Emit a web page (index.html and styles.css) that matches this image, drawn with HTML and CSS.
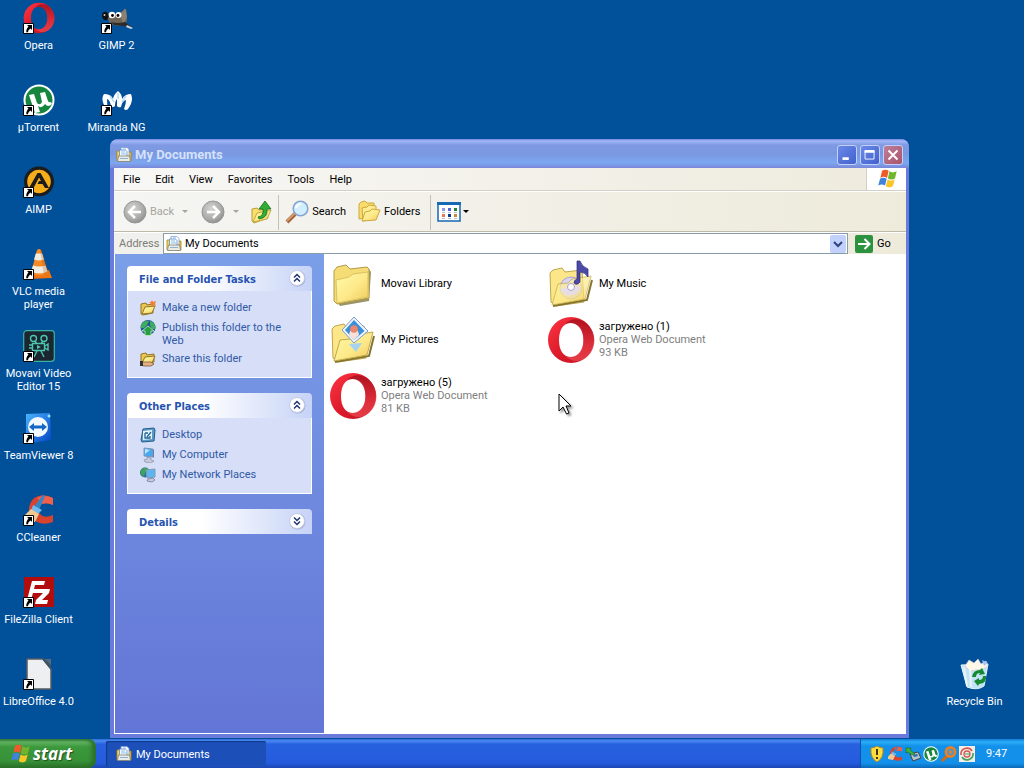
FILE: index.html
```html
<!DOCTYPE html>
<html lang="en">
<head>
<meta charset="utf-8">
<title>Desktop</title>
<link rel="stylesheet" href="styles.css">
</head>
<body>
<svg class="defs" aria-hidden="true">
  <defs>
    <linearGradient id="red" x1="0" y1="0" x2="1" y2="1"><stop offset="0" stop-color="#ff3643"/><stop offset=".5" stop-color="#dd1b2b"/><stop offset="1" stop-color="#c01424"/></linearGradient>
    <linearGradient id="redR" x1="0" y1="0" x2="0" y2="1"><stop offset="0" stop-color="#a00d1a"/><stop offset=".6" stop-color="#e0353f"/><stop offset="1" stop-color="#ee4a52"/></linearGradient>
    <linearGradient id="gold" x1="0" y1="0" x2="1" y2="1"><stop offset="0" stop-color="#fffaa8"/><stop offset=".55" stop-color="#fde98a"/><stop offset="1" stop-color="#efc95a"/></linearGradient>
    <radialGradient id="grey" cx=".4" cy=".35" r=".7"><stop offset="0" stop-color="#d4d4d2"/><stop offset=".7" stop-color="#a9a9a7"/><stop offset="1" stop-color="#8b8b89"/></radialGradient>
    <linearGradient id="tv" x1="0" y1="0" x2="1" y2="1"><stop offset="0" stop-color="#49b4ff"/><stop offset="1" stop-color="#0444c4"/></linearGradient>
    <symbol id="arrow" viewBox="0 0 11 11"><path fill="#fff" stroke="#000" d="M.5.5h10v10H.5z"/><path d="M4 2h5v5L7.600 5.600C6 6.500 5.300 7.500 5 9.300H3.300C3.100 7 4 5.300 5.500 3.600z"/></symbol>
    <symbol id="opera" viewBox="0 0 48 48"><path fill="url(#red)" fill-rule="evenodd" d="M24 1a23 23 0 1 0 0 46a23 23 0 1 0 0-46zM24 7c8 0 12.500 7 12.500 17S32 41 24 41S12 34 12 24S16 7 24 7z"/><path fill="url(#redR)" d="M18 8C24 2 32 2 39 7c11 9 11 25 1 34c-7 6-15 5-22-1c10 4 18.500-4 18.500-16S28 4 18 8z" opacity=".75"/></symbol>
    <symbol id="folder" viewBox="0 0 48 48"><path d="M7 12L9 8l9-2 4 4 17-2 2 3-2 29L10 45 8 42z" fill="#6f6628" opacity=".7" transform="translate(1 1)"/><path d="M5 11l3-4 9-2 4 4 17-2 2 2v29L8 44 5 41z" fill="#f6dc74" stroke="#b29a48"/><path d="M7 20l13-3 4-3 15-2v25L8 43z" fill="url(#gold)" stroke="#d9c163"/></symbol>
    <symbol id="openfolder" viewBox="0 0 48 48"><path d="M3 13l3-3 9-2 3 4 17-2 2 32-28 4-5-4z" fill="#fbe78a" stroke="#bfa64e"/><path d="M6 46l34-6 5-20" fill="none" stroke="#84762f" stroke-width="2"/></symbol>
    <symbol id="front" viewBox="0 0 48 48"><path d="M5 45l6-21 10-1 4-4 19-3-6 23z" fill="url(#gold)" stroke="#c2a84a"/></symbol>
    <symbol id="docs" viewBox="0 0 16 16"><path d="M1 4h3l1 1v9H1z" fill="#ffd84a" stroke="#a88328" stroke-width=".8"/><path d="M12 5h3v9h-4z" fill="#f0c23c" stroke="#a88328" stroke-width=".8"/><path d="M5 .5h6l2 2V9H5z" fill="#fff" stroke="#7d9fd2" stroke-width=".8"/><path d="M3.500 3h6l1.500 1.500V10h-7.500z" fill="#f4faff" stroke="#5b8cc8" stroke-width=".8"/><path d="M5 5h4M5 7h5M7 2h3" stroke="#75b1e8" stroke-width=".8"/><path d="M2.500 9h11l1 5.500H1.500z" fill="#e9ece6" stroke="#85806c" stroke-width=".8"/><path d="M4 11.500h8" stroke="#8fb2d4"/></symbol>
    <symbol id="flag" viewBox="0 0 20 20"><path d="M5.500 2.500q3-2 6 0L10 9Q7 7 4 9z" fill="#ef5a28"/><path d="M12.200 3q3 2 6.600 0l-1.600 6.500q-3 2-6.400 0z" fill="#70b52c"/><path d="M3.700 9.800q3-2 6 0L8.200 16q-3-2-6.200 0z" fill="#3f83dc"/><path d="M10.600 10.500q3 2 6.400 0l-1.700 6.200q-3 2-6.400 0z" fill="#f9c628"/></symbol>
    <symbol id="ut" viewBox="0 0 32 32"><circle cx="16" cy="16" r="15.500" fill="#fff"/><circle cx="16" cy="16" r="13.500" fill="#16863f"/><path d="M6 11l5-1 3 9q3 3 5-1l-2-9 5-1 3 9q1 2 3 1l1 2q-4 4-7 0-3 5-7 2l2 6-5 1z" fill="#fff"/></symbol>
    <symbol id="cc" viewBox="0 0 32 32"><path d="M30 11V4Q19-2 10 5q-7 9-2 18 8 10 22 5v-7q-9 4-13-1-4-7 2-10 5-2 11 1z" fill="#d8432e"/><path d="M30 4v7q-6-3-11-1l-5-6Q21 0 30 4z" fill="#f0614c"/><path d="M20 1l2 1-6 14-6-2z" fill="#3485c9"/><path d="M10 11l9 5-4 4-7-3z" fill="#72b9ed"/><path d="M8 15l8 5-4 8-10-2 0-5z" fill="#f0c992"/></symbol>
    <symbol id="chev" viewBox="0 0 18 18"><circle cx="9.500" cy="9.500" r="8" fill="#8792b5" opacity=".6"/><circle cx="9" cy="9" r="7.500" fill="#fff" stroke="#c5cce6"/><path d="M6 8.500L9 5.500l3 3M6 12.500l3-3 3 3" fill="none" stroke="#21366f" stroke-width="1.500"/></symbol>
    <symbol id="monitor" viewBox="0 0 16 16"><path d="M4 1l9 1v8l-9-1z" fill="#48a7ee" stroke="#7e96bd"/><path d="M5 2l5 1-5 4z" fill="#b7e6ff"/><path d="M13 2l1 1v8l-1-1z" fill="#6c7e9e"/><path d="M7 10l4 1v2l3 1-3 2-6-1-1-2 3-1z" fill="#c6cbe0" stroke="#7a819a" stroke-width=".6"/></symbol>
  </defs>
</svg>

<main class="desktop">
  <nav class="shortcuts" aria-label="Desktop shortcuts">
    <a class="shortcut" href="#"><span class="pic"><svg><use href="#opera"/></svg><svg class="badge"><use href="#arrow"/></svg></span><span>Opera</span></a>
    <a class="shortcut" href="#"><span class="pic"><svg><use href="#ut"/></svg><svg class="badge"><use href="#arrow"/></svg></span><span>µTorrent</span></a>
    <a class="shortcut" href="#"><span class="pic"><svg viewBox="0 0 32 32"><circle cx="16" cy="15.500" r="15" fill="#1c1c1c"/><circle cx="16" cy="15.500" r="11.800" fill="#f5ad1a"/><path d="M14.500 7h3L26 22h-4l-2.500-4h-5l1.500-3h2L16 11.500 10.500 22H6z" fill="#1c1c1c"/></svg><svg class="badge"><use href="#arrow"/></svg></span><span>AIMP</span></a>
    <a class="shortcut" href="#"><span class="pic"><svg viewBox="0 0 32 32"><path d="M6 23l20-1 3 8-24 1z" fill="#ee7414"/><path d="M14 2q2-2 4 0l7 23q-8 5-17 0z" fill="#f68a22"/><path d="M12.800 5.500h6.400l1.800 6q-5 2-10 0zM10 17.500q6 2 12.500 0l2 6q-8 4-16.500 0z" fill="#efece2"/><path d="M17 2l2 0 7 22-5 3z" fill="#a84a08" opacity=".25"/></svg><svg class="badge"><use href="#arrow"/></svg></span><span>VLC media player</span></a>
    <a class="shortcut" href="#"><span class="pic"><svg viewBox="0 0 32 32"><rect x=".7" y=".7" width="30.600" height="30.600" rx="3" fill="#1b2630" stroke="#39b4a4" stroke-width="1.200"/><g fill="none" stroke="#4bc7ae" stroke-width="1.400"><circle cx="10.500" cy="8.500" r="3"/><circle cx="21" cy="8.500" r="3"/><path d="M12 11l2 3M20 11l-2 3M9.500 13.500h12v7h-12zM22 16l3-2v6l-3-2M14 21l-3 6M18 21l3 6M6 15h3M6 18h3"/></g><path d="M14 15l4 2-4 2z" fill="#4bc7ae"/></svg><svg class="badge"><use href="#arrow"/></svg></span><span>Movavi Video Editor 15</span></a>
    <a class="shortcut" href="#"><span class="pic"><svg viewBox="0 0 32 32"><path d="M3 2l24-1 1 27-20 3-5-4z" fill="url(#tv)"/><circle cx="15" cy="15" r="10" fill="#f3f9ff"/><path d="M6 15l5-4v2.500h8V11l5 4-5 4v-2.500h-8V19z" fill="#1268c4"/><circle cx="26" cy="4" r="1.500" fill="#8cecff"/></svg><svg class="badge"><use href="#arrow"/></svg></span><span class="one">TeamViewer 8</span></a>
    <a class="shortcut" href="#"><span class="pic"><svg><use href="#cc"/></svg><svg class="badge"><use href="#arrow"/></svg></span><span>CCleaner</span></a>
    <a class="shortcut" href="#"><span class="pic"><svg viewBox="0 0 32 32"><path d="M1 1h30v30H1z" fill="#b30c0c"/><path d="M9 5h13l-1 4h-9l-1 4h7l-1 4h-7l-2 7H4zM17 13h10l-1 4-7 7h6l-1 4H12l1-4 7-7h-4z" fill="#fff"/></svg><svg class="badge"><use href="#arrow"/></svg></span><span class="one">FileZilla Client</span></a>
    <a class="shortcut" href="#"><span class="pic"><svg viewBox="0 0 32 32"><path d="M4 1h16l8 10v20H4z" fill="#eeeff1" stroke="#555b63" stroke-width="1.500"/><path d="M19 1l9 11V5l-3-4z" fill="#3f5366"/><path d="M22 1h6v6z" fill="#526b80"/></svg><svg class="badge"><use href="#arrow"/></svg></span><span class="one">LibreOffice 4.0</span></a>
    <a class="shortcut" href="#"><span class="pic"><svg viewBox="0 0 32 32"><path d="M6 11q8 3 14 0l4-5 2 9q1 6-4 8-7 2-12-1-4-4-4-11z" fill="#706658"/><path d="M19 11l6-4 1 8-4 7z" fill="#8c806e"/><path d="M1 13q1-4 5-3l2 4-2 4q-5 1-5-5z" fill="#111"/><circle cx="3.500" cy="13" r="1" fill="#ccc"/><circle cx="11" cy="13" r="3.300" fill="#fff"/><circle cx="17.500" cy="13" r="3" fill="#fff"/><circle cx="11.500" cy="13.500" r="1.400"/><circle cx="17" cy="13.500" r="1.400"/><path d="M10 20q6 2 14 0l8 6-9-2-10-1z" fill="#302b28"/><path d="M26 23l6 3-2 1-5-2z" fill="#c8d4dc"/></svg><svg class="badge"><use href="#arrow"/></svg></span><span>GIMP 2</span></a>
    <a class="shortcut" href="#"><span class="pic"><svg viewBox="0 0 32 32"><path d="M5 25Q-1 15 3 10q7 0 9 5 1-5 5-8 4 3 4 8 3-5 9-5 3 7-3 15-2 2-4 0 2-5 2-9-4 1-5 7-3 1-4-1l0-7q-2 2-2 7-2 2-4 0-1-6-4-7 0 6 1 10z" fill="#fff"/><path d="M17 9v6M9 12l4 6M25 12l-4 6" stroke="#b7dcf8" stroke-width="1.500"/></svg><svg class="badge"><use href="#arrow"/></svg></span><span class="one">Miranda NG</span></a>
  </nav>

  <a class="shortcut recycle" href="#"><span class="pic"><svg viewBox="0 0 32 32"><path d="M2 7l27-1-4 22q-7 5-17 1z" fill="#c1e3f5" stroke="#e5f7ff"/><path d="M6 8l4-6 5 3 4-4 3 5 5-3 2 5-5 3-13 2z" fill="#fff8e8" stroke="#c8cbd5" stroke-width=".6"/><path d="M23 2l6 3-4 3z" fill="#a9c2f3"/><path d="M5 9l3 19M11 11l1 18" stroke="#fff" stroke-width="2" opacity=".6"/><path d="M13 19q1-7 8-7l2-2 3 6-6 1 1-2q-4 0-4 4zM27 18q1 7-7 8l-1 2-4-5 5-3v2q4 0 4-4z" fill="#168a31"/></svg></span><span class="one">Recycle Bin</span></a>

  <section class="window" aria-label="My Documents">
    <header class="titlebar">
      <svg class="i16"><use href="#docs"/></svg>
      <h1>My Documents</h1>
      <button class="cap" aria-label="Minimize"><svg viewBox="0 0 20 20"><path d="M5 14h7" stroke="#fff" stroke-width="3"/></svg></button>
      <button class="cap" aria-label="Maximize"><svg viewBox="0 0 20 20"><path d="M4.500 5.500h10v9h-10z" fill="none" stroke="#fff"/><path d="M4 6h11" stroke="#fff" stroke-width="3"/></svg></button>
      <button class="cap close" aria-label="Close"><svg viewBox="0 0 20 20"><path d="M5 5l10 10M15 5L5 15" stroke="#fff" stroke-width="2.200"/></svg></button>
    </header>

    <div class="menubar">
      <button>File</button><button>Edit</button><button>View</button><button>Favorites</button><button>Tools</button><button>Help</button>
      <span class="brand"><svg class="i22"><use href="#flag"/></svg></span>
    </div>

    <div class="toolbar">
      <button class="tool back" disabled><svg class="i24" viewBox="0 0 24 24"><circle cx="12" cy="12" r="11" fill="url(#grey)" stroke="#979795"/><path d="M18 12H7m5-6l-6 6 6 6" fill="none" stroke="#fff" stroke-width="2.500"/></svg>Back<i class="caret"></i></button>
      <button class="tool fwd" disabled aria-label="Forward"><svg class="i24" viewBox="0 0 24 24"><circle cx="12" cy="12" r="11" fill="url(#grey)" stroke="#979795"/><path d="M6 12h11m-5-6l6 6-6 6" fill="none" stroke="#fff" stroke-width="2.500"/></svg><i class="caret"></i></button>
      <button class="tool up" aria-label="Up"><svg class="i24" viewBox="0 0 24 24"><path d="M3 9l5-1 2 2 7-1 2 9-14 5-2-2z" fill="#f8df6e" stroke="#b99f38"/><path d="M4 22l4-9 14-3-4 9z" fill="url(#gold)" stroke="#c2a845"/><path d="M9 17q6-1 5-8h-4l6-8 6 8h-4q1 9-8 10z" fill="#32ad34" stroke="#13701b" stroke-width=".8"/></svg></button>
      <i class="sep"></i>
      <button class="tool"><svg class="i24" viewBox="0 0 24 24"><path d="M2 22l8-8" stroke="#a6653a" stroke-width="4"/><path d="M2 21l8-8" stroke="#e2a67b" stroke-width="1.500"/><circle cx="15.500" cy="8.500" r="7.300" fill="#d2efff" stroke="#87a6d2" stroke-width="1.600"/><path d="M11 8q1-4 5-4" fill="none" stroke="#fff" stroke-width="2"/></svg>Search</button>
      <button class="tool folders"><svg class="i24" viewBox="0 0 24 24"><path d="M2 4l2-2 4-1 2 2 7 0v14L2 19z" fill="#f8dc6c" stroke="#cda93c"/><path d="M5 8l5-1 2-2 7 1v13L6 21z" fill="#ffeb94" stroke="#cda93c"/><path d="M5 21l3-9 5-1 2-2 8 1-4 10z" fill="url(#gold)" stroke="#cda93c"/></svg>Folders</button>
      <i class="sep"></i>
      <button class="tool views" aria-label="Views"><svg class="i24" viewBox="0 0 24 24"><path d="M1 3h22v18H1z" fill="#fff" stroke="#1768b5" stroke-width="1.500"/><path d="M0 2h24v3H0z" fill="#1768b5"/><path d="M5 8h3v3H5z" fill="#9296e8"/><path d="M11 8h3v3h-3z" fill="#4e68d8"/><path d="M17 8h3v3h-3z" fill="#248338"/><path d="M5 14h3v3H5z" fill="#ef7654"/><path d="M11 14h3v3h-3z" fill="#083c87"/><path d="M17 14h3v3h-3z" fill="#c78a36"/><path d="M5 12.500h3m3 0h3m3 0h3M5 18.500h3m3 0h3m3 0h3" stroke="#b7bed4"/></svg><i class="caret"></i></button>
    </div>

    <form class="address">
      <label for="addr">Address</label>
      <div class="combo"><svg class="i16"><use href="#docs"/></svg><input id="addr" type="text" value="My Documents"><button type="button" class="drop" aria-label="Show addresses"><svg viewBox="0 0 16 18"><path d="M4 7l4 4 4-4" fill="none" stroke="#2f437f" stroke-width="2"/></svg></button></div>
      <button type="button" class="go"><svg class="i18" viewBox="0 0 18 18"><rect width="18" height="18" rx="2" fill="#2c9240"/><path d="M3 9h11M9.500 4l5 5-5 5" fill="none" stroke="#fff" stroke-width="2"/></svg>Go</button>
    </form>

    <div class="body">
      <aside class="side">
        <section class="card">
          <h2>File and Folder Tasks<button aria-label="Collapse"><svg><use href="#chev"/></svg></button></h2>
          <ul>
            <li><svg class="i16" viewBox="0 0 16 16"><path d="M1 4l5-1 1 2 6-1v9l-10 2-2-1z" fill="#eac84f" stroke="#947427"/><path d="M2 14l3-7 10-1-3 7z" fill="url(#gold)" stroke="#947427"/><path d="M12 0l1 2 3-1-1 3 1 2-3-1-2 1V4L9 2h2z" fill="#f57c35"/></svg><a href="#">Make a new folder</a></li>
            <li><svg class="i16" viewBox="0 0 16 16"><circle cx="8" cy="7.500" r="7.500" fill="#20599a"/><path d="M1 5q3-5 8-4L7 5 4 8 1 8zM10 1q6 2 5.500 8L12 9l-2-4z" fill="#3fae5c"/><path d="M8 6l6 5h-3v4.500H5V11H2z" fill="#27a13f" stroke="#c4efc7" stroke-width=".8"/></svg><a href="#">Publish this folder to the Web</a></li>
            <li><svg class="i16" viewBox="0 0 16 16"><path d="M1 3l5-1 1 2 7-1v8l-11 2-2-1z" fill="#eac84f" stroke="#947427"/><path d="M2 12l3-6 10-1-3 7z" fill="url(#gold)" stroke="#947427"/><path d="M0 11h4l7 0 3 2-3 2H4l-4-1z" fill="#e6b180" stroke="#6d4931" stroke-width=".7"/><path d="M0 10h3v5H0z" fill="#333"/></svg><a href="#">Share this folder</a></li>
          </ul>
        </section>
        <section class="card">
          <h2>Other Places<button aria-label="Collapse"><svg><use href="#chev"/></svg></button></h2>
          <ul>
            <li><svg class="i16" viewBox="0 0 16 16"><path d="M3 2l11-1 1 2-1 11-12 1-1-2z" fill="#5b9bc8" stroke="#245d87"/><path d="M3 4l9-1v9l-9 1z" fill="#e3f4fb"/><path d="M11 5l-4 5M5 6v5h5V9M5 6h3" stroke="#246595" fill="none" stroke-width="1.300"/></svg><a href="#">Desktop</a></li>
            <li><svg class="i16"><use href="#monitor"/></svg><a href="#">My Computer</a></li>
            <li><svg class="i16" viewBox="0 0 16 16"><circle cx="5" cy="5.500" r="5" fill="#2c6ca7"/><path d="M1 3q4-4 7-1L5 6l-1 4-3-3z" fill="#3da554"/><path d="M6 3l9-1v8l-8 1z" fill="#5bb6ee" stroke="#8499bd"/><path d="M8 12l5-1 2 2-3 2-5-1z" fill="#c6cbe0" stroke="#687090" stroke-width=".7"/></svg><a href="#">My Network Places</a></li>
          </ul>
        </section>
        <section class="card">
          <h2>Details<button aria-label="Expand"><svg viewBox="0 0 18 18"><circle cx="9.500" cy="9.500" r="8" fill="#8792b5" opacity=".6"/><circle cx="9" cy="9" r="7.500" fill="#fff" stroke="#c5cce6"/><path d="M6 5.500l3 3 3-3M6 9.500l3 3 3-3" fill="none" stroke="#21366f" stroke-width="1.500"/></svg></button></h2>
        </section>
      </aside>

      <div class="files">
        <a class="file" href="#"><svg class="i48"><use href="#folder"/></svg><span>Movavi Library</span></a>
        <a class="file" href="#"><svg class="i48" viewBox="0 0 48 48"><use href="#openfolder"/><circle cx="24" cy="28" r="11" fill="#d9d4f3" stroke="#a9a3cf"/><use href="#front" opacity=".7"/><path d="M13 29a11 11 0 0 0 21-3" fill="#e4dcf4" opacity=".8"/><circle cx="24" cy="27" r="3.500" fill="#fff" stroke="#a9a3cf"/><path d="M30 1l3 0q2 6 8 8l0 8q-3-5-8-5v10q-3 4-6 1 0-3 3-4z" fill="#4b4aa6" stroke="#2a2a78" stroke-width=".7"/></svg><span>My Music</span></a>
        <a class="file" href="#"><svg class="i48" viewBox="0 0 48 48"><use href="#openfolder"/><use href="#front"/><path d="M25 1l14 14-14 12-12-13z" fill="#edf6ff" stroke="#7d9cc4"/><path d="M25 4l10.500 11L25 24l-9-10z" fill="#3b8fd9"/><path d="M21 15q4-4 8 0l1 4-5 5-5-5z" fill="#f7e0d8"/><circle cx="25" cy="13" r="3.800" fill="#e9866c"/><path d="M20 28l13-1-6 9z" fill="#a6d3ef"/></svg><span>My Pictures</span></a>
        <a class="file" href="#"><svg class="i48"><use href="#opera"/></svg><span>загружено (1)<small>Opera Web Document</small><small>93 KB</small></span></a>
        <a class="file" href="#"><svg class="i48"><use href="#opera"/></svg><span>загружено (5)<small>Opera Web Document</small><small>81 KB</small></span></a>
      </div>
    </div>
  </section>

  <svg class="pointer" viewBox="0 0 14 23" aria-hidden="true"><path d="M1 1v17l4-4 3.500 7 2.500-1-3-7h5z" fill="#fff" stroke="#000"/></svg>
</main>

<footer class="taskbar">
  <button class="start"><svg class="i22"><use href="#flag"/></svg>start</button>
  <button class="task"><svg class="i16"><use href="#docs"/></svg>My Documents</button>
  <div class="tray">
    <svg class="i16" viewBox="0 0 16 16"><path d="M8 0q3 2 6 2 1 10-6 14Q1 12 2 2q3 0 6-2z" fill="#ffdc3c" stroke="#ad8a27"/><path d="M8 3v6M8 11v2" stroke="#40351c" stroke-width="2"/></svg>
    <svg class="i16"><use href="#cc"/></svg>
    <svg class="i16" viewBox="0 0 16 16"><path d="M5 8l8-2 3 6-8 3z" fill="#b5c2cc" stroke="#3b464c"/><path d="M8 9l4-1 1 2-4 1z" fill="#2c69a6"/><path d="M1 2l5 0-1 2 5 4-3 1-4-3-2 1z" fill="#3eb63e" stroke="#16641d" stroke-width=".6"/></svg>
    <svg class="i16"><use href="#ut"/></svg>
    <svg class="i16" viewBox="0 0 16 16"><path d="M1 15l5-5" stroke="#d9680f" stroke-width="3"/><circle cx="9.500" cy="6" r="4.700" fill="#5f92b8" stroke="#f07f1c" stroke-width="2.400"/><circle cx="9.500" cy="6" r="1.500" fill="#f07f1c"/></svg>
    <svg class="i16" viewBox="0 0 16 16"><path fill="#f3eee8" d="M0 0h16v16H0z"/><path d="M2 9a6 6 0 0 1 11-4" fill="none" stroke="#d7564f" stroke-width="1.600"/><path d="M14 7a6 6 0 0 1-11 4" fill="none" stroke="#4a9f61" stroke-width="1.600"/><circle cx="8" cy="8" r="3" fill="none" stroke="#d7564f" stroke-width="1.300"/><path d="M6 8h5" stroke="#4a9f61"/></svg>
    <time>9:47</time>
  </div>
</footer>
</body>
</html>
```

FILE: styles.css
```css
* { box-sizing: border-box; }
html, body { height: 100%; }
body {
  margin: 0;
  display: grid;
  grid-template-rows: 1fr 29px;
  overflow: hidden;
  background: #00509a;
  font: 11px/13px Roboto, "Liberation Sans", sans-serif;
  color: #000;
}
button, input { font: inherit; color: inherit; margin: 0; padding: 0; border: 0; background: none; }
a { color: inherit; text-decoration: none; }
svg { display: block; flex: none; }
.defs { position: absolute; width: 0; height: 0; }
.i16 { width: 16px; height: 16px; }
.i18 { width: 18px; height: 18px; }
.i22 { width: 22px; height: 22px; }
.i24 { width: 24px; height: 24px; }
.i48 { width: 48px; height: 48px; }

.desktop { position: relative; min-height: 0; }
.shortcuts {
  display: grid;
  grid-auto-flow: column;
  grid-template-rows: repeat(9, 82px);
  grid-auto-columns: 78px;
  justify-content: start;
}
.shortcut {
  display: flex;
  flex-direction: column;
  align-items: center;
  gap: 5px;
  padding: 2px 2px 0 1px;
  color: #fff;
  text-align: center;
}
.one { white-space: nowrap; }
.pic { position: relative; width: 32px; height: 32px; }
.pic svg { width: 32px; height: 32px; }
.pic .badge { position: absolute; left: 0; bottom: 0; width: 11px; height: 11px; }
.recycle { position: absolute; right: 11px; bottom: 31px; width: 76px; }

.window {
  position: absolute;
  inset: 139px 115px 1px 110px;
  display: flex;
  flex-direction: column;
  padding: 0 3px 4px 4px;
  background: #6b7bdc;
  border-radius: 8px 8px 0 0;
}
.titlebar {
  display: flex;
  align-items: center;
  gap: 3px;
  height: 29px;
  margin: 0 -3px 0 -4px;
  padding: 3px 6px 0 6px;
  border-radius: 8px 8px 0 0;
  background: linear-gradient(#7186dc 0, #a3b8fa 2px, #7f9ae2 6px, #7a98e0 50%, #7ca7f0 24px, #7b86d8 100%);
}
.titlebar h1 { flex: 1; margin: 0; font-size: 13px; line-height: 16px; font-weight: 700; color: #d5e1fb; }
.cap {
  width: 20px;
  height: 20px;
  border: 1px solid #c5d0fa;
  border-radius: 3px;
  background: linear-gradient(135deg, #6a8bea, #4260cd);
}
.cap svg { width: 18px; height: 18px; }
.close { background: linear-gradient(135deg, #bd7f9c, #a95468); }

.menubar {
  display: flex;
  gap: 1px;
  height: 23px;
  padding-left: 2px;
  border-bottom: 1px solid #d3d0c3;
  background: linear-gradient(90deg, #f7f7f6, #eeebdd);
}
.menubar button { padding: 0 7px; }
.brand { display: grid; place-items: center; width: 40px; margin-left: auto; background: #fff; border-left: 1px solid #d3d0c3; }

.toolbar {
  display: flex;
  align-items: center;
  height: 41px;
  padding-left: 9px;
  border-top: 1px solid #fff;
  border-bottom: 1px solid #bdbaa9;
  background: linear-gradient(90deg, #f5f5f3, #eeebdb);
}
.tool { display: flex; align-items: center; gap: 3px; }
.tool:disabled { color: #a5a5a0; }
.caret { border: 3px solid transparent; border-top-color: currentColor; border-bottom: 0; }
.back .caret { margin-left: 5px; }
.fwd { margin-left: 13px; gap: 8px; }
.up { margin: 0 5px 0 10px; }
.sep { align-self: stretch; width: 1px; margin: 3px 6px 1px 0; background: #c5c2b3; }
.folders { margin: 0 10px 0 11px; }
.views { gap: 2px; }

.address {
  display: flex;
  align-items: center;
  height: 22px;
  padding-left: 5px;
  border-top: 1px solid #fff;
  background: linear-gradient(90deg, #f0f0ed, #eeebdb);
}
.address label { width: 44px; color: #7c7c78; }
.combo { flex: 1; display: flex; align-items: center; gap: 3px; height: 21px; padding: 0 1px 0 2px; border: 1px solid #8a9ba8; background: #fff; }
.combo input { flex: 1; min-width: 0; outline: 0; }
.drop { width: 16px; height: 18px; border-radius: 2px; background: #c2d1fb; }
.drop svg { width: 16px; height: 18px; }
.go { display: flex; align-items: center; gap: 4px; width: 58px; padding-left: 7px; }

.body { flex: 1; display: flex; min-height: 0; border: 1px solid #fff; border-top: 0; background: #fff; }
.side {
  width: 209px;
  padding: 12px;
  display: flex;
  flex-direction: column;
  gap: 15px;
  background: linear-gradient(#7a9fe8, #6375d6);
}
.card h2 {
  display: flex;
  align-items: center;
  justify-content: space-between;
  height: 25px;
  margin: 0;
  padding: 2px 6px 0 12px;
  border-radius: 4px 4px 0 0;
  background: linear-gradient(90deg, #fff 40%, #c6d3f7);
  color: #2754b0;
  font: 700 11px/13px "DejaVu Sans Condensed", "DejaVu Sans", sans-serif;
}
.card h2 button { padding-bottom: 3px; }
.card h2 svg { width: 18px; height: 18px; }
.card ul { display: flex; flex-direction: column; gap: 4px; margin: 0; padding: 9px 12px 10px; list-style: none; border: 1px solid #fff; border-top: 0; background: #d6dff7; color: #3159a6; }
.card li { display: flex; gap: 6px; min-height: 16px; }
.card li a { padding-top: 1px; }

.files { flex: 1; display: grid; grid-template-columns: repeat(auto-fill, 218px); grid-auto-rows: 56px; padding: 2px 5px; background: #fff; }
.file { display: flex; align-items: center; gap: 4px; }
.file span { padding-bottom: 2px; }
.file small { display: block; font-size: 11px; color: #808080; }
.pointer { position: absolute; left: 558px; top: 393px; width: 14px; height: 23px; filter: drop-shadow(2px 2px 1px #0006); }

.taskbar {
  display: flex;
  background: linear-gradient(#3169d8 0, #4a8af2 2px, #2861e0 5px, #245bdc 24px, #1c46b4 100%);
  color: #fff;
}
.start {
  display: flex;
  align-items: center;
  gap: 2px;
  width: 96px;
  padding-left: 9px;
  border-radius: 0 8px 8px 0;
  background: linear-gradient(#3b7d3b 0, #62b562 3px, #3c983c 8px, #379237 22px, #2a6f2a 100%);
  box-shadow: inset -4px 0 4px #2a702a;
  font: italic 700 17px/20px "Open Sans", sans-serif;
  text-shadow: 1px 1px 1px #234d23;
}
.task {
  display: flex;
  align-items: center;
  gap: 4px;
  width: 160px;
  margin: 2px 0 1px 10px;
  padding-left: 10px;
  border-radius: 2px;
  background: #1c4fb8;
  box-shadow: inset 1px 1px 1px #123886;
}
.tray {
  display: flex;
  align-items: center;
  gap: 2px;
  width: 164px;
  margin-left: auto;
  padding-left: 8px;
  border-left: 1px solid #0b53ac;
  background: linear-gradient(#0f7bd8 0, #2cb0f8 3px, #1290ea 7px, #1391ea 24px, #0d68b8 100%);
}
.tray time { margin-left: 9px; }
```
